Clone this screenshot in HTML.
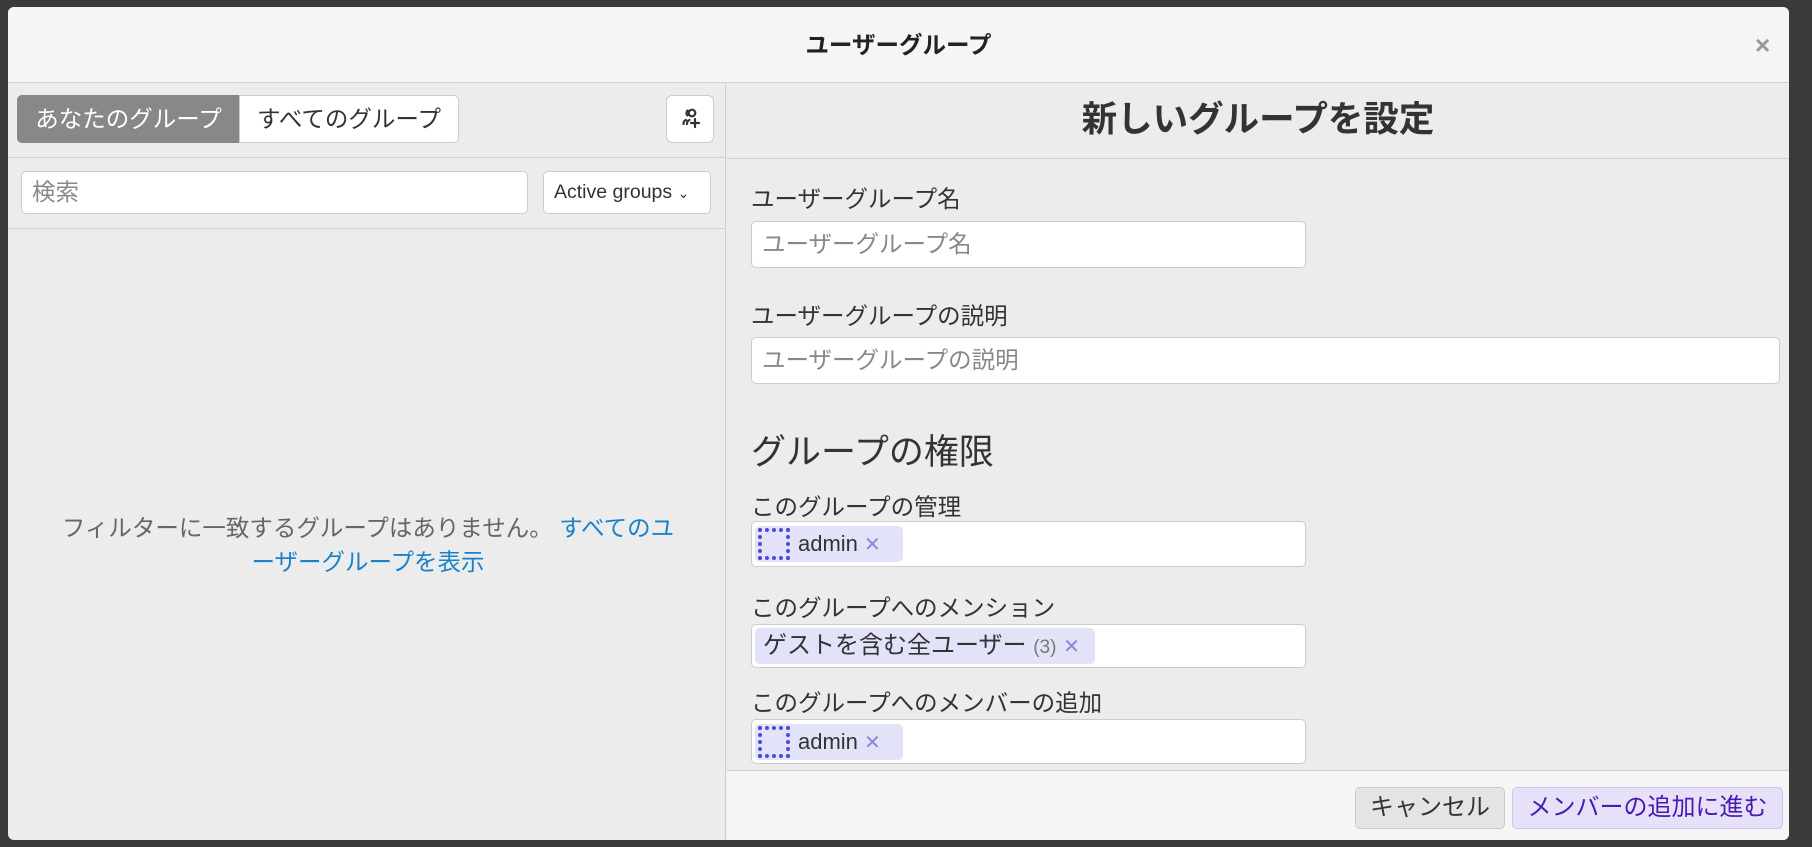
<!DOCTYPE html>
<html><head><meta charset="utf-8"><style>
*{box-sizing:border-box;margin:0;padding:0}
body{width:1812px;height:847px;background:#3a3a3a;font-family:"Liberation Sans","Noto Sans CJK JP",sans-serif;color:#333;position:relative;overflow:hidden}
.abs{position:absolute}
.modal{left:8px;top:7px;width:1781px;height:833px;background:#ececec;border-radius:6px;overflow:hidden}
.hdr{left:0;top:0;width:1781px;height:76px;background:#f5f5f5;border-bottom:1px solid #d0d0d0;text-align:center;line-height:76px;font-size:23.5px;font-weight:bold;color:#222}
.close{right:-6px;top:0;width:40px;line-height:76px;font-size:26px;color:#999;font-weight:bold}
.left{left:0;top:76px;width:718px;height:757px;border-right:1px solid #d0d0d0}
.tabrow{left:0;top:0;width:718px;height:75px;border-bottom:1px solid #d0d0d0}
.tab{top:12px;height:48px;line-height:46px;font-size:23.5px;border:1px solid #ccc;background:#fff;color:#333;text-align:center;white-space:nowrap}
.input{background:#fff;border:1px solid #ccc;border-radius:5px}
.lbl{font-size:23.5px;color:#333;white-space:nowrap}
.ph{font-size:23.5px;color:#888;padding-left:10px;white-space:nowrap}
.pill{background:#e2e2f8;border-radius:5px;height:36px;top:4px;left:3px;font-size:22px;line-height:36px;color:#333;white-space:nowrap}
.av{position:absolute;left:3px;top:2px;width:32px;height:32px;border:4px dotted #4a4ae0}
.x{color:#8888dd;font-size:20px}
.btn{top:16px;height:42px;line-height:40px;font-size:24px;border:1px solid #ccc;border-radius:5px;text-align:center;white-space:nowrap}
</style></head><body>
<div class="abs modal">
 <div class="abs hdr">ユーザーグループ</div>
 <div class="abs close">×</div>
 <div class="abs left">
  <div class="abs tabrow">
   <div class="abs tab" style="left:9px;width:223px;background:#888;color:#fff;border-color:#888;border-radius:5px 0 0 5px">あなたのグループ</div>
   <div class="abs tab" style="left:231px;width:220px;border-radius:0 5px 5px 0">すべてのグループ</div>
   <div class="abs input" style="left:658px;top:12px;width:48px;height:48px;border-radius:6px">
    <svg width="48" height="48" viewBox="0 0 48 48" style="position:absolute;left:-1px;top:-1px"><g fill="none" stroke="#333" stroke-width="2.2" stroke-linecap="round"><path d="M21.5 15.5a3.5 3.5 0 0 0 0 5"/><circle cx="26" cy="18" r="3.3"/><path d="M17.5 29c0-2.5 1-3.5 2.5-4M21 29c0-2.5 1-3.5 2.5-4"/><path d="M25 28h8M29 24v8"/></g></svg>
   </div>
  </div>
  <div class="abs input" style="left:13px;top:88px;width:507px;height:43px"><div class="ph" style="line-height:41px">検索</div></div>
  <div class="abs input" style="left:535px;top:88px;width:168px;height:43px;font-size:19.5px;line-height:41px;padding-left:10px;color:#333">Active groups <span style="font-size:14px">&#8964;</span></div>
  <div class="abs" style="left:0;top:145px;width:718px;border-top:1px solid #d0d0d0"></div>
  <div class="abs" style="left:30px;top:428px;width:660px;text-align:center;font-size:23.5px;line-height:34px;color:#666">フィルターに一致するグループはありません。 <span style="color:#1a82c8">すべてのユ<br>ーザーグループを表示</span></div>
 </div>
 <div class="abs" style="left:719px;top:76px;width:1062px;height:76px;border-bottom:1px solid #d0d0d0;text-align:center;line-height:72px;font-size:35.5px;font-weight:bold;color:#333">新しいグループを設定</div>
 <div class="abs lbl" style="left:743px;top:173px">ユーザーグループ名</div>
 <div class="abs input" style="left:743px;top:214px;width:555px;height:47px"><div class="ph" style="line-height:45px">ユーザーグループ名</div></div>
 <div class="abs lbl" style="left:743px;top:290px">ユーザーグループの説明</div>
 <div class="abs input" style="left:743px;top:330px;width:1029px;height:47px"><div class="ph" style="line-height:45px">ユーザーグループの説明</div></div>
 <div class="abs" style="left:743px;top:417px;font-size:35px;color:#333">グループの権限</div>
 <div class="abs lbl" style="left:743px;top:481px">このグループの管理</div>
 <div class="abs input" style="left:743px;top:514px;width:555px;height:46px"><div class="abs pill" style="width:148px"><div class="av"></div><span style="position:absolute;left:43px">admin <span class="x">✕</span></span></div></div>
 <div class="abs lbl" style="left:743px;top:582px">このグループへのメンション</div>
 <div class="abs input" style="left:743px;top:617px;width:555px;height:44px"><div class="abs pill" style="width:340px;top:3px;padding-left:8px;font-size:24px">ゲストを含む全ユーザー <span style="color:#777;font-size:19px">(3)</span> <span class="x">✕</span></div></div>
 <div class="abs lbl" style="left:743px;top:677px">このグループへのメンバーの追加</div>
 <div class="abs input" style="left:743px;top:712px;width:555px;height:45px"><div class="abs pill" style="width:148px"><div class="av"></div><span style="position:absolute;left:43px">admin <span class="x">✕</span></span></div></div>
 <div class="abs" style="left:719px;top:763px;width:1062px;height:70px;background:#f5f5f5;border-top:1px solid #d0d0d0">
  <div class="abs btn" style="left:628px;width:150px;background:#e4e4e4;color:#333">キャンセル</div>
  <div class="abs btn" style="left:785px;width:271px;background:#e6e0f8;color:#4a1ab0;border-color:#cbc4ec">メンバーの追加に進む</div>
 </div>
</div>
</body></html>
